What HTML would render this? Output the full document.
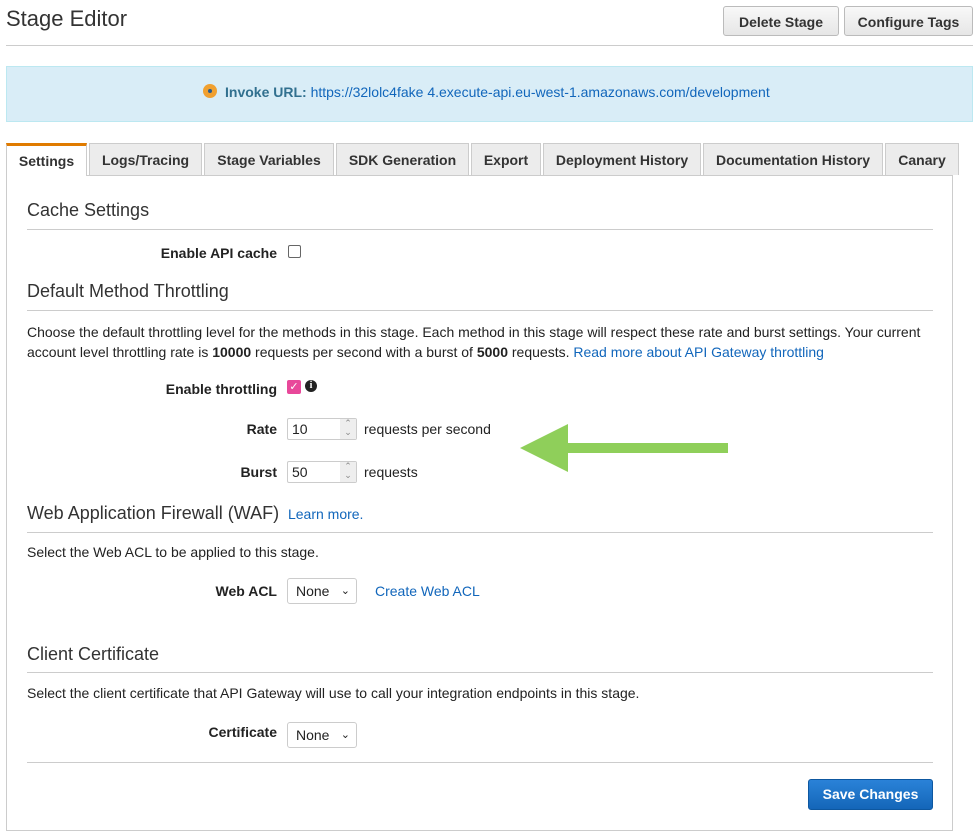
<!DOCTYPE html>
<html><head><style>
body{margin:0;width:980px;height:839px;background:#fff;font-family:"Liberation Sans",sans-serif;color:#222;position:relative;overflow:hidden}
.a{position:absolute}
.btn{position:absolute;top:6px;height:30px;border:1px solid #bbb;border-radius:3px;background:linear-gradient(#f8f8f8,#e6e6e6);font-size:14px;font-weight:bold;color:#333;text-align:center;line-height:30px;box-sizing:border-box}
.tab{position:absolute;top:143px;height:32px;background:#ececec;border:1px solid #ccc;border-bottom:none;box-sizing:border-box;font-size:14px;font-weight:bold;color:#333;text-align:center;line-height:32px}
h3{position:absolute;margin:0;font-weight:normal;font-size:18px;color:#333;left:27px}
.hr{position:absolute;left:27px;width:906px;height:1px;background:#ccc}
.lbl{position:absolute;right:703px;font-size:14px;font-weight:bold;text-align:right;white-space:nowrap}
.t{position:absolute;font-size:14px;white-space:nowrap}
.lnk{color:#1166bb}
.inp{position:absolute;left:287px;width:70px;height:22px;border:1px solid #ccc;border-radius:2px;box-sizing:border-box;font-size:14px;line-height:20px;padding-left:4px}
.spin{position:absolute;right:0;top:0;width:16px;height:20px;background:#eee;font-size:9px;line-height:9px;text-align:center;color:#888}
.sel{position:absolute;left:287px;width:70px;height:26px;border:1px solid #ccc;border-radius:3px;box-sizing:border-box;font-size:14px;line-height:24px;padding-left:8px}
</style></head><body>
<div class="a" style="left:6px;top:6px;font-size:22px;color:#333">Stage Editor</div>
<div class="btn" style="left:723px;width:116px">Delete Stage</div>
<div class="btn" style="left:844px;width:129px">Configure Tags</div>
<div class="a" style="left:6px;top:45px;width:967px;height:1px;background:#ccc"></div>
<div class="a" style="left:6px;top:66px;width:967px;height:56px;background:#d9edf7;border:1px solid #bce8f1;box-sizing:border-box"></div>
<div class="a" style="left:203px;top:84px;width:14px;height:14px;border-radius:50%;background:#f0a030"></div>
<div class="a" style="left:208px;top:89px;width:4px;height:4px;border-radius:50%;background:#2a5a8a"></div>
<div class="t" style="left:225px;top:84px;color:#31708f"><b>Invoke URL:</b> <span class="lnk">https://32lolc4fake 4.execute-api.eu-west-1.amazonaws.com/development</span></div>
<div class="a" style="left:6px;top:175px;width:947px;height:656px;border:1px solid #ccc;border-top:none;box-sizing:border-box"></div>
<div class="a" style="left:6px;top:175px;width:947px;height:1px;background:#ccc"></div>
<div class="tab" style="left:6px;width:81px;background:#fff;border-top:3px solid #e07b00;height:33px;line-height:30px">Settings</div>
<div class="tab" style="left:89px;width:113px">Logs/Tracing</div>
<div class="tab" style="left:204px;width:130px">Stage Variables</div>
<div class="tab" style="left:336px;width:133px">SDK Generation</div>
<div class="tab" style="left:471px;width:70px">Export</div>
<div class="tab" style="left:543px;width:158px">Deployment History</div>
<div class="tab" style="left:703px;width:180px">Documentation History</div>
<div class="tab" style="left:885px;width:74px">Canary</div>
<h3 style="top:200px">Cache Settings</h3><div class="hr" style="top:229px"></div>
<div class="lbl" style="top:245px">Enable API cache</div>
<div class="a" style="left:288px;top:245px;width:11px;height:11px;border:1px solid #666;border-radius:2px"></div>
<h3 style="top:281px">Default Method Throttling</h3><div class="hr" style="top:310px"></div>
<div class="t" style="left:27px;top:322px;line-height:20px">Choose the default throttling level for the methods in this stage. Each method in this stage will respect these rate and burst settings. Your current<br>account level throttling rate is <b>10000</b> requests per second with a burst of <b>5000</b> requests. <span class="lnk">Read more about API Gateway throttling</span></div>
<div class="lbl" style="top:381px">Enable throttling</div>
<div class="a" style="left:287px;top:380px;width:14px;height:14px;border-radius:2px;background:#e8489a;color:#fff;font-size:11px;line-height:14px;text-align:center">✓</div>
<div class="a" style="left:305px;top:380px;width:12px;height:12px;border-radius:50%;background:#222;color:#fff;font-size:10px;font-weight:bold;line-height:12px;text-align:center;font-family:'Liberation Serif',serif">i</div>
<div class="lbl" style="top:421px">Rate</div>
<div class="inp" style="top:418px">10<div class="spin">⌃<br>⌄</div></div>
<div class="t" style="left:364px;top:421px">requests per second</div>
<div class="lbl" style="top:464px">Burst</div>
<div class="inp" style="top:461px">50<div class="spin">⌃<br>⌄</div></div>
<div class="t" style="left:364px;top:464px">requests</div>
<svg class="a" style="left:518px;top:422px" width="212" height="52"><polygon points="2,26 50,2 50,21 210,21 210,31 50,31 50,50" fill="#8fcf5a"/></svg>
<h3 style="top:503px">Web Application Firewall (WAF) <span class="lnk" style="font-size:14px">&nbsp;Learn more.</span></h3><div class="hr" style="top:532px"></div>
<div class="t" style="left:27px;top:544px">Select the Web ACL to be applied to this stage.</div>
<div class="lbl" style="top:583px">Web ACL</div>
<div class="sel" style="top:578px">None <span style="position:absolute;right:6px;font-size:11px">⌄</span></div>
<div class="t lnk" style="left:375px;top:583px">Create Web ACL</div>
<h3 style="top:644px">Client Certificate</h3><div class="hr" style="top:672px"></div>
<div class="t" style="left:27px;top:685px">Select the client certificate that API Gateway will use to call your integration endpoints in this stage.</div>
<div class="lbl" style="top:724px">Certificate</div>
<div class="sel" style="top:722px">None <span style="position:absolute;right:6px;font-size:11px">⌄</span></div>
<div class="hr" style="top:762px"></div>
<div class="a" style="left:808px;top:779px;width:125px;height:31px;background:linear-gradient(#2a82d8,#1466b8);border:1px solid #0d57a0;border-radius:3px;box-sizing:border-box;color:#fff;font-size:14px;font-weight:bold;text-align:center;line-height:29px">Save Changes</div>
</body></html>
